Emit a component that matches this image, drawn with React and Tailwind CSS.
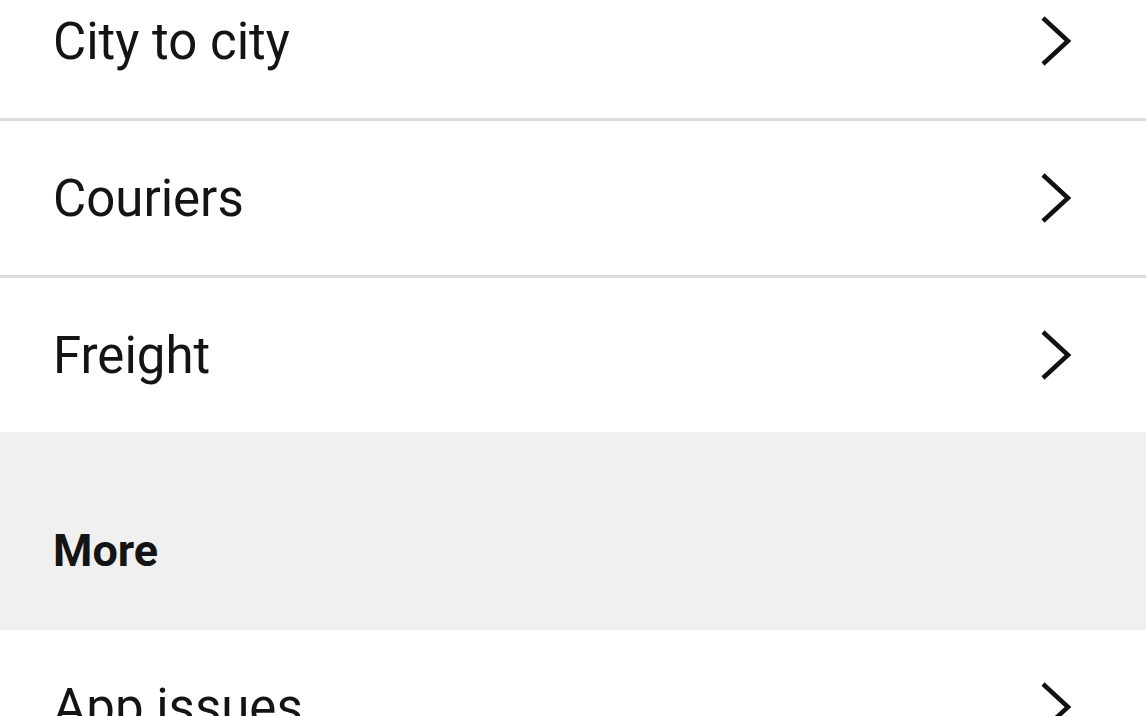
import React from "react";

function Chevron() {
  return (
    <svg width="40" height="56" viewBox="0 0 40 56" className="shrink-0">
      <path d="M7 5 L32 28 L7 51" fill="none" stroke="#111" strokeWidth="4.5" strokeLinecap="butt" strokeLinejoin="miter" />
    </svg>
  );
}

function Row({ label, border = true }) {
  return (
    <div className={"flex items-center justify-between pl-[53px] pr-[70px] bg-white " + (border ? "h-[157px] border-b-[3px] border-[#dcdcdc]" : "h-[154px]")}>
      <span className="text-[51px] text-[#141414] leading-none">{label}</span>
      <Chevron />
    </div>
  );
}

export default function App() {
  return (
    <div className="w-[1146px] h-[716px] overflow-hidden bg-white" style={{ fontFamily: "Roboto, 'Noto Sans', sans-serif" }}>
      <div className="-mt-[36px]">
        <Row label="City to city" />
        <Row label="Couriers" />
        <Row label="Freight" border={false} />
        <div className="h-[198px] bg-[#f0f0f0] flex items-end pl-[53px] pb-[57px]">
          <span className="text-[45px] font-bold text-[#141414] leading-none">More</span>
        </div>
        <Row label="App issues" border={false} />
      </div>
    </div>
  );
}
